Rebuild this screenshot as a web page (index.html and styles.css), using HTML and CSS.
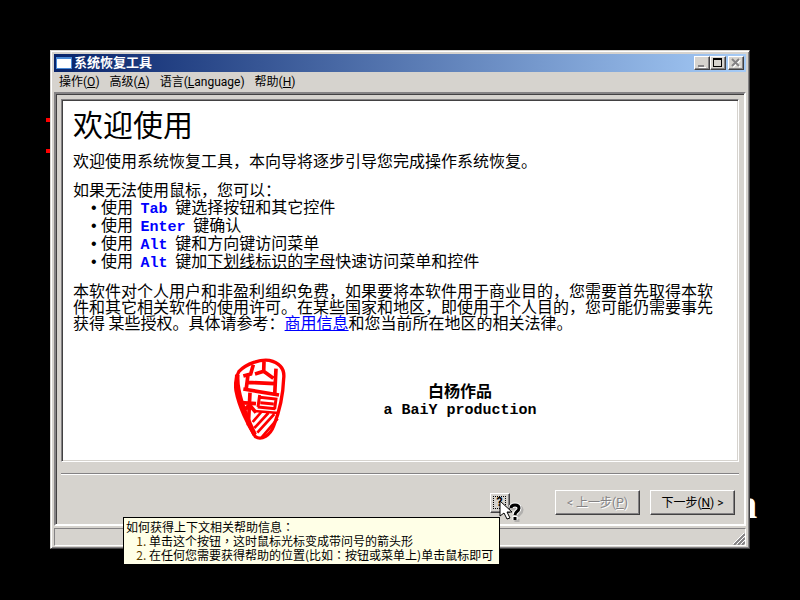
FILE: index.html
```
<!DOCTYPE html>
<html lang="zh-CN">
<head>
  <meta charset="UTF-8">
  <meta name="viewport" content="width=device-width, initial-scale=1.0">
  <title>系统恢复工具</title>
  <link rel="stylesheet" href="styles.css">
</head>
<body>
  <div class="mark mark-top"></div>
  <div class="mark mark-bottom"></div>
  <div class="wall-text">n</div>

  <div class="window">
    <div class="titlebar">
      <span class="app-icon"></span>
      <span class="title">系统恢复工具</span>
      <button class="caption-btn" aria-label="最小化">
        <svg width="14" height="12"><path d="M4 10.5h7" stroke="#fff"/><path d="M3 9h6" stroke="#848284" stroke-width="2"/></svg>
      </button>
      <button class="caption-btn" aria-label="最大化">
        <svg width="14" height="12"><path d="M2.5 1v9M10.5 1v9M2 9.5h9" stroke="#000" fill="none"/><path d="M2 2h9" stroke="#000" stroke-width="2"/></svg>
      </button>
      <button class="caption-btn close" aria-label="关闭">
        <svg width="14" height="12"><path d="M4 3l7 7M11 3l-7 7" stroke="#fff" stroke-width="2"/><path d="M3 2l7 7M10 2l-7 7" stroke="#848284" stroke-width="2"/></svg>
      </button>
    </div>

    <nav class="menu">
      <button>操作(<u>O</u>)</button>
      <button>高级(<u>A</u>)</button>
      <button>语言(<u>L</u>anguage)</button>
      <button>帮助(<u>H</u>)</button>
    </nav>

    <div class="client">
      <main class="page">
        <h1>欢迎使用</h1>
        <p>欢迎使用系统恢复工具，本向导将逐步引导您完成操作系统恢复。</p>
        <p class="keys-intro">如果无法使用鼠标，您可以：</p>
        <ul class="keys">
          <li>使用 <b>Tab</b> 键选择按钮和其它控件</li>
          <li>使用 <b>Enter</b> 键确认</li>
          <li>使用 <b>Alt</b> 键和方向键访问菜单</li>
          <li>使用 <b>Alt</b> 键加<u>下划线标识的字母</u>快速访问菜单和控件</li>
        </ul>
        <p>本软件对个人用户和非盈利组织免费，如果要将本软件用于商业目的，您需要首先取得本软件和其它相关软件的使用许可。在某些国家和地区，即使用于个人目的，您可能仍需要事先获得 某些授权。具体请参考：<a href="#">商用信息</a>和您当前所在地区的相关法律。</p>
        <div class="credit">
          <svg class="seal" viewBox="42 26 156 246" fill="none" stroke="#f00" stroke-width="11">
            <path d="M57 66C80 42 122 29 148 33C181 41 195 58 191 88C189 145 177 190 161 230C151 257 125 275 106 262C84 228 57 172 48 124C45 101 46 84 57 66Z" stroke-width="10"/>
            <path d="M52 76C48 120 66 178 104 256" stroke-width="14"/>
            <path d="M132 36L131 68M100 46L92 74L70 80M131 66L105 74M131 66L160 87M84 76L78 124M168 58L164 138M85 99L164 103"/>
            <path d="M70 119L177 137"/>
            <path d="M64 160L108 163M90 130L85 228M87 168L68 186M91 170L108 190"/>
            <path d="M119 137L114 173M119 144L168 149L164 179M113 173L166 178M121 160L161 164" stroke-width="9"/>
            <path d="M103 185L177 191M124 188L98 218M145 191L103 236M163 194L112 250M173 208L125 264" stroke-width="8"/>
          </svg>
          <div class="maker">白杨作品<br><span class="latin">a BaiY production</span></div>
        </div>
      </main>
      <hr>
      <div class="actions">
        <div class="help-wrap">
          <button class="help" aria-label="帮助" aria-describedby="tip"><span>?</span></button>
          <svg class="cursor" width="26" height="24" viewBox="0 0 26 24">
            <path d="M13 10c1-4 9-4 9 0c0 4-4 3-4 7M18 19v3" stroke="#999" stroke-width="5" fill="none" opacity=".6"/>
            <path d="M12 8c0-4 8-4 8 0c0 4-4 3-4 7M16 16v4" stroke="#fff" stroke-width="5" fill="none"/>
            <path d="M12 8c0-4 8-4 8 0c0 4-4 3-4 7M16 17v3" stroke="#000" stroke-width="3" fill="none"/>
            <path d="M1 1v15l4-3l3 6l3-1l-3-6h5z" fill="#fff" stroke="#000"/>
          </svg>
          <div class="tip" id="tip" role="tooltip">
            如何获得上下文相关帮助信息<span class="punct" lang="zh-TW">：</span>
            <ol>
              <li>单击这个按钮<span class="punct" lang="zh-TW">，</span>这时鼠标光标变成带问号的箭头形</li>
              <li>在任何您需要获得帮助的位置(比如<span class="punct" lang="zh-TW">：</span>按钮或菜单上)单击鼠标即可</li>
            </ol>
          </div>
        </div>
        <button class="btn back" disabled>&lt; 上一步(<u>P</u>)</button>
        <button class="btn">下一步(<u>N</u>) &gt;</button>
      </div>
    </div>

    <div class="status">
      <svg width="12" height="12"><path d="M1 12L12 1M5 12L12 5M9 12L12 9" stroke="#848284" stroke-width="2"/><path d="M0 11L11 0M4 11L12 3M8 11L12 7" stroke="#fff"/></svg>
    </div>
  </div>
</body>
</html>
```

FILE: styles.css
```
* {
  box-sizing: border-box;
}
body {
  margin: 0;
  min-height: 100vh;
  padding: 50px 50px 51px;
  display: flex;
  background: #000;
  color: #000;
  font: 12px/14px Roboto, "Noto Sans CJK SC", sans-serif;
}
button {
  font: inherit;
  color: inherit;
  padding: 0;
  border: 0;
  background: #d6d3ce;
  white-space: nowrap;
}

/* wallpaper bits that stick out behind the window */
.mark {
  position: absolute;
  left: 46px;
  width: 8px;
  height: 4px;
  background: #f00;
}
.mark-top {
  top: 118px;
}
.mark-bottom {
  top: 149px;
}
.wall-text {
  position: absolute;
  left: 735px;
  top: 485px;
  color: #fff;
  font: bold 40px/40px "Liberation Serif", serif;
}

.window {
  position: relative;
  flex: 1;
  display: flex;
  flex-direction: column;
  padding: 3px 3px 2px;
  background: #d6d3ce;
  border: 1px solid;
  border-color: #d6d3ce #424142 #424142 #d6d3ce;
  box-shadow: inset 1px 1px #fff, inset -1px -1px #848284;
}
.titlebar {
  display: flex;
  align-items: center;
  height: 18px;
  padding: 0 2px;
  background: linear-gradient(to right, #08246b, #a5cbf7);
  color: #fff;
}
.app-icon {
  width: 16px;
  height: 12px;
  background: #fff;
  border: 1px solid #4a8ad6;
  border-top-width: 2px;
}
.title {
  flex: 1;
  margin-left: 2px;
  font-size: 13px;
  font-weight: bold;
}
.caption-btn {
  width: 16px;
  height: 14px;
  border: 1px solid;
  border-color: #fff #424142 #424142 #fff;
  box-shadow: inset -1px -1px #848284;
}
.caption-btn svg {
  display: block;
}
.close {
  margin-left: 2px;
}

.menu {
  display: flex;
  gap: 10px;
  height: 20px;
  padding: 0 5px;
}
.menu button {
  background: none;
}

.client {
  flex: 1;
  display: flex;
  flex-direction: column;
  padding: 5px;
  border: 2px solid;
  border-color: #848284 #fff #fff #848284;
  box-shadow: inset 1px 1px #424142;
}
.page {
  flex: 1;
  padding: 8px 15px 0 11px;
  background: #fff;
  border: 1px solid;
  border-color: #848284 #fff #fff #848284;
  box-shadow: inset 1px 1px #424142, inset -1px -1px #d6d3ce;
  font: 16px/16px "Noto Sans CJK SC", sans-serif;
}
.page h1 {
  margin: 0 0 14px;
  font-size: 30px;
  line-height: 30px;
  font-weight: normal;
}
.page p {
  margin: 0 0 13px;
}
.page .keys-intro {
  margin: 0;
}
.page a {
  color: #00f;
}
.keys {
  margin: 0 0 13px;
  padding-left: 28px;
  line-height: 18px;
  list-style-type: "• ";
}
.keys li::marker {
  font-family: "Liberation Sans", sans-serif;
}
.keys b {
  margin: 0 4px;
  color: #00f;
  font: bold 15px/8px "Liberation Mono", monospace;
}
.credit {
  display: flex;
  align-items: center;
  justify-content: center;
  gap: 97px;
  margin-top: 28px;
  padding-right: 25px;
  font-weight: bold;
  text-align: center;
  line-height: 17px;
}
.seal {
  width: 52px;
  height: 82px;
}
.latin {
  font: bold 15px/8px "Liberation Mono", monospace;
}
hr {
  width: 100%;
  margin: 11px 0 15px;
  border: 0;
  border-top: 1px solid #848284;
  border-bottom: 1px solid #fff;
}

.actions {
  display: flex;
  align-items: center;
  justify-content: flex-end;
  gap: 10px;
  padding: 0 4px 4px 0;
}
.btn {
  width: 85px;
  height: 25px;
}
.btn,
.help {
  border: 1px solid;
  border-color: #fff #424142 #424142 #fff;
  box-shadow: inset -1px -1px #848284;
}
.back {
  color: #848284;
  text-shadow: 1px 1px #fff;
}
.help-wrap {
  position: relative;
  margin-right: 35px;
}
.help {
  display: block;
  width: 20px;
  height: 20px;
  padding: 2px 3px 3px 2px;
}
.help span {
  display: block;
  border: 1px dotted #000;
  font-weight: bold;
  line-height: 11px;
}
.cursor {
  position: absolute;
  left: 9px;
  top: 7px;
  z-index: 2;
}

.tip {
  position: absolute;
  right: 10px;
  top: 24px;
  width: 377px;
  padding: 2px;
  background: #ffffe7;
  border: 1px solid #000;
  font-family: "Noto Sans CJK SC", sans-serif;
  white-space: nowrap;
}
.tip ol {
  margin: 0;
  padding-left: 23px;
}
.tip li::marker {
  color: #5a3d00;
}
.punct {
  font-family: "Noto Sans CJK TC", sans-serif;
}

.status {
  display: flex;
  align-items: flex-end;
  justify-content: flex-end;
  height: 18px;
  margin-top: 2px;
  border: 1px solid;
  border-color: #848284 #fff #fff #848284;
}
```
